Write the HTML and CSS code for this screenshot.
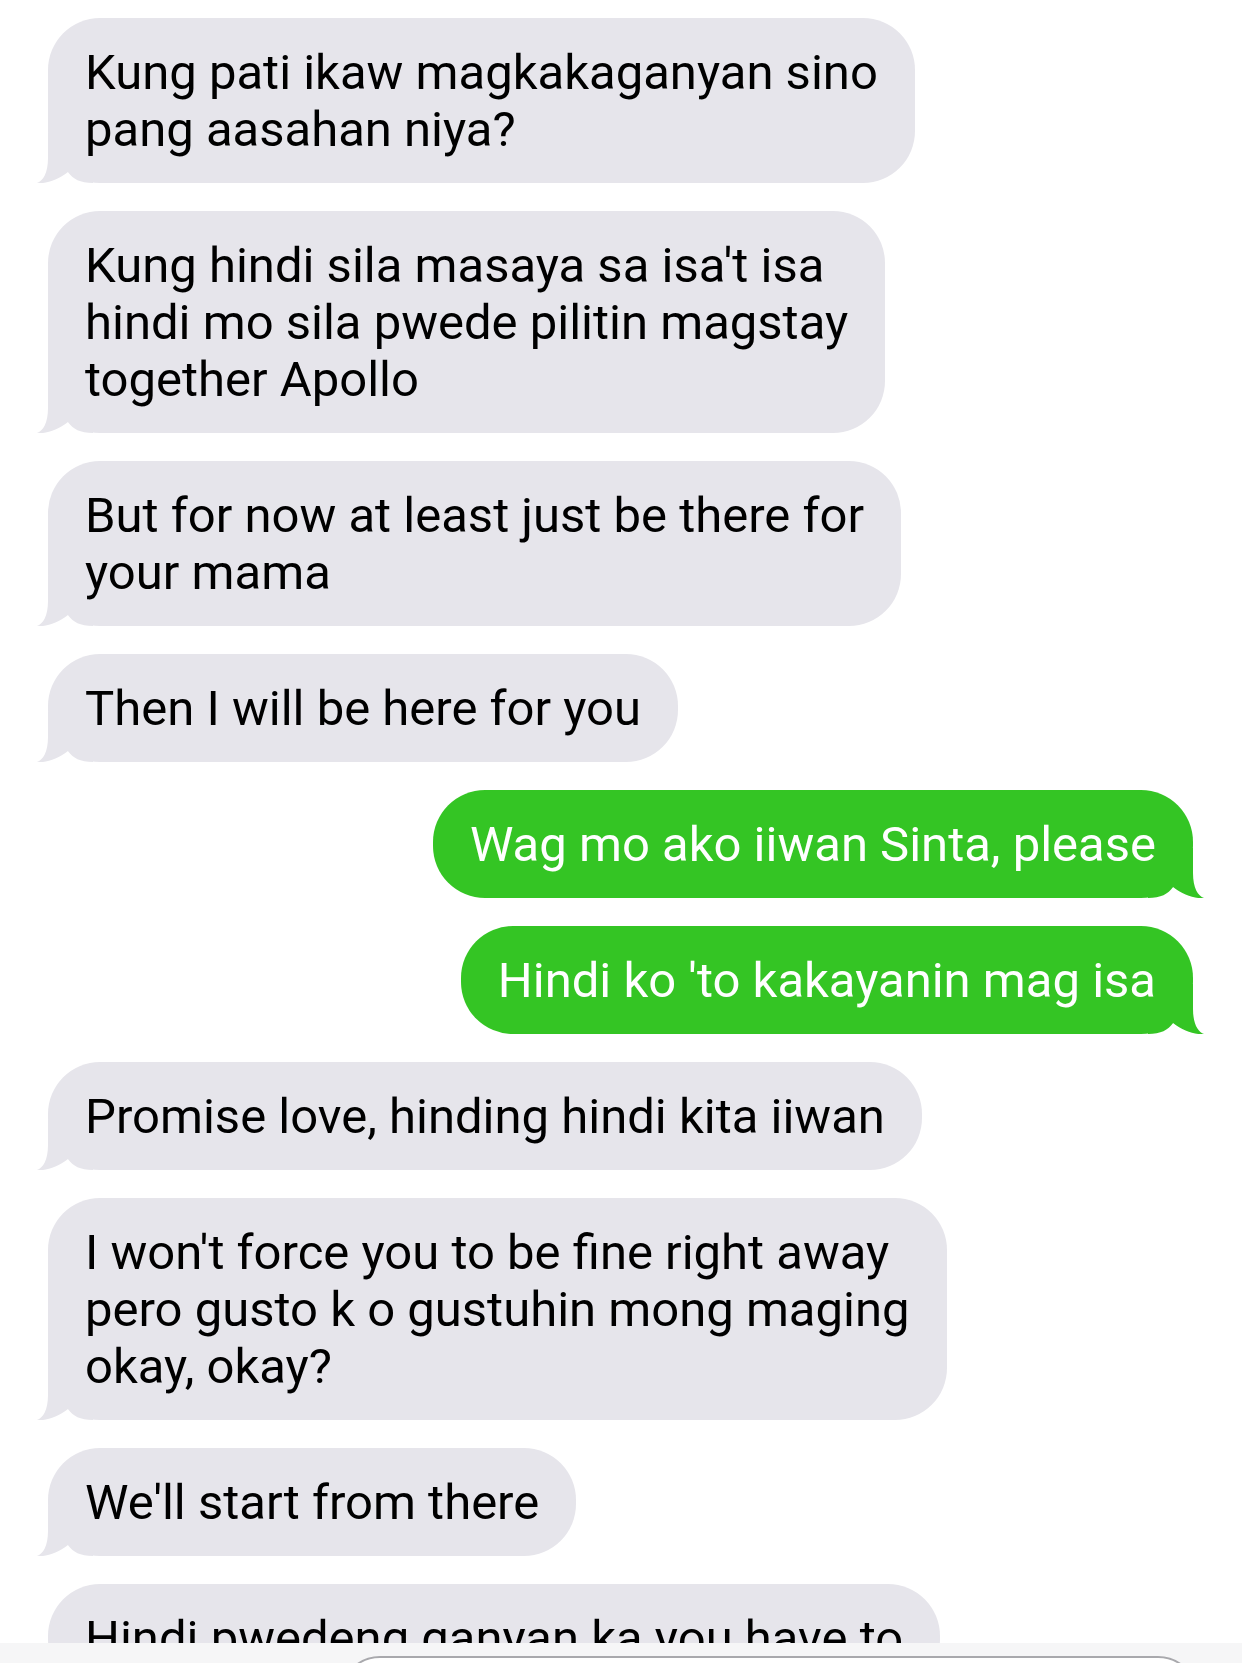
FILE: index.html
```html
<!DOCTYPE html>
<html lang="tl">
<head>
<meta charset="utf-8">
<title>Messages</title>
<link rel="stylesheet" href="styles.css">
</head>
<body>
<div class="screen">
<div class="thread">
  <div class="msg them"><div class="bubble"><svg class="tail" viewBox="0 0 60 55" width="60" height="55"><path d="M12 5 L12 30 C12 45 7 53 1 55 C10 56 22 52 32 44 C37 51 44 55 57 55 L57 5 Z"/></svg><span class="txt">Kung pati ikaw magkakaganyan sino<br>pang aasahan niya?</span></div></div>
  <div class="msg them"><div class="bubble"><svg class="tail" viewBox="0 0 60 55" width="60" height="55"><path d="M12 5 L12 30 C12 45 7 53 1 55 C10 56 22 52 32 44 C37 51 44 55 57 55 L57 5 Z"/></svg><span class="txt">Kung hindi sila masaya sa isa't isa<br>hindi mo sila pwede pilitin magstay<br>together Apollo</span></div></div>
  <div class="msg them"><div class="bubble"><svg class="tail" viewBox="0 0 60 55" width="60" height="55"><path d="M12 5 L12 30 C12 45 7 53 1 55 C10 56 22 52 32 44 C37 51 44 55 57 55 L57 5 Z"/></svg><span class="txt">But for now at least just be there for<br>your mama</span></div></div>
  <div class="msg them"><div class="bubble"><svg class="tail" viewBox="0 0 60 55" width="60" height="55"><path d="M12 5 L12 30 C12 45 7 53 1 55 C10 56 22 52 32 44 C37 51 44 55 57 55 L57 5 Z"/></svg><span class="txt">Then I will be here for you</span></div></div>
  <div class="msg me"><div class="bubble"><svg class="tail" viewBox="0 0 60 55" width="60" height="55"><path d="M12 5 L12 30 C12 45 7 53 1 55 C10 56 22 52 32 44 C37 51 44 55 57 55 L57 5 Z"/></svg><span class="txt">Wag mo ako iiwan Sinta, please</span></div></div>
  <div class="msg me"><div class="bubble"><svg class="tail" viewBox="0 0 60 55" width="60" height="55"><path d="M12 5 L12 30 C12 45 7 53 1 55 C10 56 22 52 32 44 C37 51 44 55 57 55 L57 5 Z"/></svg><span class="txt">Hindi ko 'to kakayanin mag isa</span></div></div>
  <div class="msg them"><div class="bubble"><svg class="tail" viewBox="0 0 60 55" width="60" height="55"><path d="M12 5 L12 30 C12 45 7 53 1 55 C10 56 22 52 32 44 C37 51 44 55 57 55 L57 5 Z"/></svg><span class="txt">Promise love, hinding hindi kita iiwan</span></div></div>
  <div class="msg them"><div class="bubble"><svg class="tail" viewBox="0 0 60 55" width="60" height="55"><path d="M12 5 L12 30 C12 45 7 53 1 55 C10 56 22 52 32 44 C37 51 44 55 57 55 L57 5 Z"/></svg><span class="txt">I won't force you to be fine right away<br>pero gusto k o gustuhin mong maging<br>okay, okay?</span></div></div>
  <div class="msg them"><div class="bubble"><svg class="tail" viewBox="0 0 60 55" width="60" height="55"><path d="M12 5 L12 30 C12 45 7 53 1 55 C10 56 22 52 32 44 C37 51 44 55 57 55 L57 5 Z"/></svg><span class="txt">We'll start from there</span></div></div>
  <div class="msg them"><div class="bubble"><span class="txt">Hindi pwedeng ganyan ka you have to</span></div></div>
</div>
<div class="composer">
  <div class="field"></div>
</div>
</div>
</body>
</html>
```
FILE: styles.css
```css
html, body {
  margin: 0;
  padding: 0;
  background: #ffffff;
}

.screen {
  position: relative;
  height: 1663px;
  overflow: hidden;
}

.thread {
  display: flex;
  flex-direction: column;
  gap: 28px;
  padding: 18px 0 0 0;
  font-family: "Roboto", "Liberation Sans", sans-serif;
  font-size: 49px;
  line-height: 57px;
}

.msg {
  display: flex;
}

.msg.them {
  justify-content: flex-start;
  padding-left: 48px;
}

.msg.me {
  justify-content: flex-end;
  padding-right: 49px;
}

.bubble {
  position: relative;
  white-space: nowrap;
  padding: 25.5px 37px 25.5px 37px;
  border-radius: 52px;
}

.txt {
  position: relative;
  z-index: 1;
}

.them .bubble {
  background: #e6e5eb;
  color: #000000;
}

.me .bubble {
  background: #34c524;
  color: #ffffff;
}

.tail {
  position: absolute;
  bottom: 0;
  display: block;
  z-index: 0;
}

.them .tail {
  left: -12px;
  fill: #e6e5eb;
}

.me .tail {
  right: -12px;
  fill: #34c524;
  transform: scaleX(-1);
}

.composer {
  position: absolute;
  left: 0;
  right: 0;
  bottom: 0;
  height: 20px;
  background: #f6f6f7;
  display: flex;
  padding-left: 340px;
  padding-right: 44px;
  padding-top: 13px;
  box-sizing: border-box;
  overflow: hidden;
  z-index: 2;
}

.field {
  flex: 1;
  height: 80px;
  border: 2px solid #a9a9ad;
  border-radius: 40px;
  background: #ffffff;
}
```
